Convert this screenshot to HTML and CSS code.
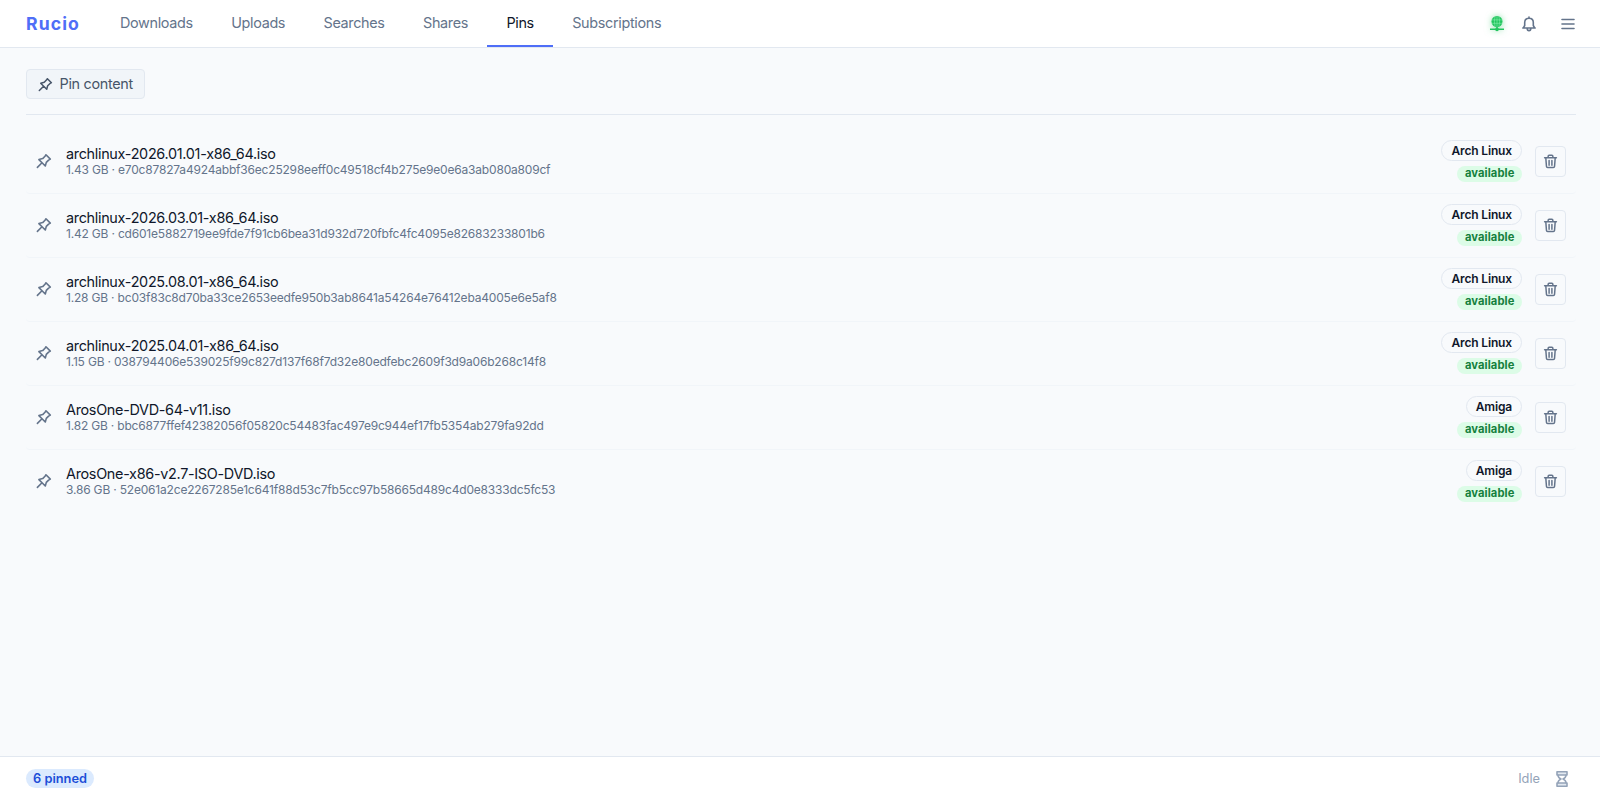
FILE: index.html
```html
<!DOCTYPE html>
<html lang="en">

<head>
    <meta charset="UTF-8">
    <meta name="viewport" content="width=device-width, initial-scale=1.0">
    <title>Rucio - Pins</title>
    <link rel="stylesheet" href="styles.css">
</head>

<body>
    <!-- Shared icons -->
    <svg class="icon-defs" width="0" height="0">
        <symbol id="icon-pin" viewBox="0 0 16 16">
            <path d="M10 1.8 14.3 6.1 12.6 7.1 10.3 9.4 9.3 13 2.9 6.6 6.7 5.6 9 3.3ZM6 9.8 1.4 14.4"/>
        </symbol>
        <symbol id="icon-trash" viewBox="0 0 16 16">
            <path d="M1.7 4.1H14.3M3 4.3 3.7 13.3Q3.8 14.5 5 14.5H11Q12.2 14.5 12.3 13.3L13 4.3M5.5 4V2.3Q5.5 1.3 6.5 1.3H9.5Q10.5 1.3 10.5 2.3V4M6.5 7V12M9.5 7V12"/>
        </symbol>
    </svg>

    <header class="topbar">
        <span class="logo">Rucio</span>
        <nav class="tabs">
            <a class="tab">Downloads</a>
            <a class="tab">Uploads</a>
            <a class="tab">Searches</a>
            <a class="tab">Shares</a>
            <a class="tab active">Pins</a>
            <a class="tab">Subscriptions</a>
        </nav>
        <div class="actions">
            <svg class="icon-network" viewBox="0 0 16 16">
                <circle cx="8" cy="5.5" r="5.5" fill="currentColor"/>
                <path class="globe-lines" d="M3 3.9H13M3 7.3H13M8 .3V10.7M6 .7Q4.8 5.5 6 10.3M10 .7Q11.2 5.5 10 10.3"/>
                <path class="base" d="M8 11V14M1 13.3H15"/>
                <circle cx="8" cy="13.4" r="1.8" fill="currentColor"/>
            </svg>
            <svg class="icon" viewBox="0 0 16 16">
                <path d="M8 1V2.2M1.8 12H14.2M2.4 11.8 3.7 9.5V6.5Q3.7 2.2 8 2.2T12.3 6.5V9.5L13.6 11.8M6.2 12.5Q6.2 14.6 8 14.6T9.8 12.5"/>
            </svg>
            <svg class="icon icon-menu" viewBox="0 0 16 16">
                <path d="M2 3.5H14M2 8H14M2 12.5H14"/>
            </svg>
        </div>
    </header>

    <main class="content">
        <div class="toolbar">
            <button class="btn-pin"><svg class="icon"><use href="#icon-pin"/></svg>Pin content</button>
        </div>

        <div class="pin-list">
            <div class="pin-row">
                <svg class="icon"><use href="#icon-pin"/></svg>
                <div class="pin-info">
                    <div class="pin-name">archlinux-2026.01.01-x86_64.iso</div>
                    <div class="pin-meta">1.43 GB · e70c87827a4924abbf36ec25298eeff0c49518cf4b275e9e0e6a3ab080a809cf</div>
                </div>
                <div class="pin-tags">
                    <span class="tag">Arch Linux</span>
                    <span class="status">available</span>
                </div>
                <button class="btn-remove"><svg class="icon"><use href="#icon-trash"/></svg></button>
            </div>
            <div class="pin-row">
                <svg class="icon"><use href="#icon-pin"/></svg>
                <div class="pin-info">
                    <div class="pin-name">archlinux-2026.03.01-x86_64.iso</div>
                    <div class="pin-meta">1.42 GB · cd601e5882719ee9fde7f91cb6bea31d932d720fbfc4fc4095e82683233801b6</div>
                </div>
                <div class="pin-tags">
                    <span class="tag">Arch Linux</span>
                    <span class="status">available</span>
                </div>
                <button class="btn-remove"><svg class="icon"><use href="#icon-trash"/></svg></button>
            </div>
            <div class="pin-row">
                <svg class="icon"><use href="#icon-pin"/></svg>
                <div class="pin-info">
                    <div class="pin-name">archlinux-2025.08.01-x86_64.iso</div>
                    <div class="pin-meta">1.28 GB · bc03f83c8d70ba33ce2653eedfe950b3ab8641a54264e76412eba4005e6e5af8</div>
                </div>
                <div class="pin-tags">
                    <span class="tag">Arch Linux</span>
                    <span class="status">available</span>
                </div>
                <button class="btn-remove"><svg class="icon"><use href="#icon-trash"/></svg></button>
            </div>
            <div class="pin-row">
                <svg class="icon"><use href="#icon-pin"/></svg>
                <div class="pin-info">
                    <div class="pin-name">archlinux-2025.04.01-x86_64.iso</div>
                    <div class="pin-meta">1.15 GB · 038794406e539025f99c827d137f68f7d32e80edfebc2609f3d9a06b268c14f8</div>
                </div>
                <div class="pin-tags">
                    <span class="tag">Arch Linux</span>
                    <span class="status">available</span>
                </div>
                <button class="btn-remove"><svg class="icon"><use href="#icon-trash"/></svg></button>
            </div>
            <div class="pin-row">
                <svg class="icon"><use href="#icon-pin"/></svg>
                <div class="pin-info">
                    <div class="pin-name">ArosOne-DVD-64-v11.iso</div>
                    <div class="pin-meta">1.82 GB · bbc6877ffef42382056f05820c54483fac497e9c944ef17fb5354ab279fa92dd</div>
                </div>
                <div class="pin-tags">
                    <span class="tag">Amiga</span>
                    <span class="status">available</span>
                </div>
                <button class="btn-remove"><svg class="icon"><use href="#icon-trash"/></svg></button>
            </div>
            <div class="pin-row">
                <svg class="icon"><use href="#icon-pin"/></svg>
                <div class="pin-info">
                    <div class="pin-name">ArosOne-x86-v2.7-ISO-DVD.iso</div>
                    <div class="pin-meta">3.86 GB · 52e061a2ce2267285e1c641f88d53c7fb5cc97b58665d489c4d0e8333dc5fc53</div>
                </div>
                <div class="pin-tags">
                    <span class="tag">Amiga</span>
                    <span class="status">available</span>
                </div>
                <button class="btn-remove"><svg class="icon"><use href="#icon-trash"/></svg></button>
            </div>
        </div>
    </main>

    <footer class="statusbar">
        <span class="count">6 pinned</span>
        <div class="activity">
            <span>Idle</span>
            <svg class="icon" viewBox="0 0 16 16">
                <path class="caps" d="M3 .8H13V4H3ZM3 12H13V15.2H3Z"/>
                <path d="M4 4.2Q4 6.6 7 8Q4 9.4 4 11.8M12 4.2Q12 6.6 9 8Q12 9.4 12 11.8"/>
            </svg>
        </div>
    </footer>
</body>

</html>
```
FILE: styles.css
```css
* {
    box-sizing: border-box;
}

body {
    margin: 0;
    height: 100vh;
    display: flex;
    flex-direction: column;
    background: #f8fafc;
    color: #0f172a;
    font-family: Inter, sans-serif;
    font-size: 14px;
}

.icon-defs {
    position: absolute;
}

.icon {
    width: 16px;
    height: 16px;
    flex-shrink: 0;
    fill: none;
    stroke: currentColor;
    stroke-width: 1.6;
    stroke-linecap: round;
    stroke-linejoin: round;
    color: #64748b;
}

/* Header */
.topbar {
    display: flex;
    align-items: stretch;
    height: 48px;
    padding: 0 24px 0 26px;
    background: #fff;
    border-bottom: 1px solid #e2e8f0;
}

.logo {
    align-self: center;
    width: 74.8px;
    font-size: 17.6px;
    font-weight: 700;
    letter-spacing: 1.1px;
    color: #4f6ef7;
}

.tabs {
    display: flex;
}

.tab {
    display: flex;
    align-items: center;
    padding: 0 19.2px;
    border-bottom: 2px solid transparent;
    font-size: 14.4px;
    letter-spacing: -0.33px;
    color: #64748b;
}

.tab.active {
    color: #0f172a;
    border-bottom-color: #4f6ef7;
}

.actions {
    display: flex;
    align-items: center;
    gap: 16px;
    margin-left: auto;
}

.icon-network {
    width: 16px;
    height: 16px;
    fill: none;
    color: #22c55e;
    filter: drop-shadow(0 0 3px rgba(34, 197, 94, 0.5));
}

.icon-network .base {
    stroke: currentColor;
    stroke-width: 1.5;
}

.icon-network .globe-lines {
    stroke: #86efac;
    stroke-width: 0.6;
}

.icon-menu {
    margin-left: 7px;
}

/* Pins */
.content {
    flex: 1;
    padding: 21px 24px 0 26px;
}

.toolbar {
    padding-bottom: 15px;
    border-bottom: 1px solid #e2e8f0;
}

.btn-pin {
    display: flex;
    align-items: center;
    gap: 6.5px;
    height: 30px;
    padding: 0 11px 1px 11px;
    border: 1px solid #e2e8f0;
    border-radius: 4px;
    background: #f1f5f9;
    color: #475569;
    font-family: inherit;
    font-size: 14.4px;
    letter-spacing: -0.3px;
}

.btn-pin .icon {
    width: 15px;
    height: 15px;
    margin-top: 1px;
    color: #475569;
}

.pin-list {
    padding-top: 15px;
}

.pin-row {
    display: flex;
    align-items: center;
    height: 64px;
    padding: 0 10px;
    border-bottom: 1px solid #f1f5f9;
    border-radius: 4px;
}

.pin-row:last-child {
    border-bottom-color: transparent;
}

.pin-row > .icon {
    margin-bottom: 1px;
}

.pin-info {
    flex: 1;
    padding-left: 14px;
    margin-bottom: 1px;
}

.pin-name {
    font-size: 14.4px;
    letter-spacing: -0.3px;
    line-height: 17px;
}

.pin-meta {
    font-size: 12px;
    letter-spacing: -0.19px;
    line-height: 15px;
    color: #64748b;
}

.pin-tags {
    display: flex;
    flex-direction: column;
    align-items: flex-end;
    gap: 5px;
    margin: 0 13px 1px 0;
}

.tag {
    height: 21px;
    padding: 0 9px;
    border: 1px solid #e2e8f0;
    border-radius: 11px;
    font-size: 12px;
    font-weight: 600;
    letter-spacing: -0.15px;
    line-height: 19px;
}

.status {
    height: 16px;
    padding: 0 7.5px;
    border-radius: 8px;
    background: #dcfce7;
    color: #15803d;
    font-size: 11.2px;
    font-weight: 700;
    letter-spacing: 0.1px;
    line-height: 15px;
}

.btn-remove {
    display: flex;
    align-items: center;
    justify-content: center;
    width: 31px;
    height: 31px;
    padding: 0;
    border: 1px solid #e2e8f0;
    border-radius: 4px;
    background: transparent;
}

.btn-remove .icon {
    width: 15px;
    height: 15px;
}

/* Footer */
.statusbar {
    display: flex;
    align-items: center;
    justify-content: space-between;
    height: 44px;
    padding: 0 30px 0 26px;
    background: #fff;
    border-top: 1px solid #e2e8f0;
}

.count {
    padding: 0 7.5px 0 7px;
    border-radius: 10px;
    background: #dbeafe;
    color: #1d4ed8;
    font-size: 12.8px;
    font-weight: 600;
    line-height: 19px;
}

.activity {
    display: flex;
    align-items: center;
    gap: 14px;
    font-size: 12.8px;
    color: #94a3b8;
}

.activity .icon {
    color: #94a3b8;
}

.activity .caps {
    fill: #e2e8f0;
}
```
